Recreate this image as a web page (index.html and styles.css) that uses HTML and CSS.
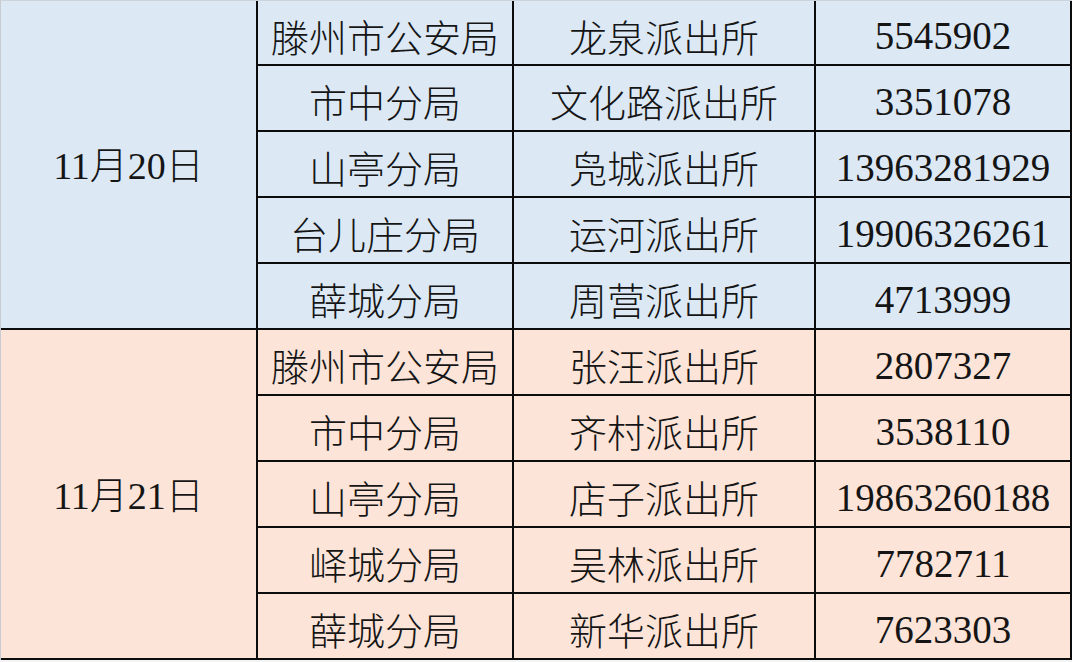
FILE: index.html
```html
<!DOCTYPE html>
<html lang="zh">
<head>
<meta charset="utf-8">
<title>派出所值班表</title>
<link rel="stylesheet" href="styles.css">
</head>
<body>
<table class="duty">
  <colgroup>
    <col class="c-date"><col class="c-bureau"><col class="c-station"><col class="c-phone">
  </colgroup>
  <tbody class="blue">
    <tr><td class="date" rowspan="5">11<span class="cjk">月</span>20<span class="cjk">日</span></td><td class="cjk">滕州市公安局</td><td class="cjk">龙泉派出所</td><td class="phone">5545902</td></tr>
    <tr><td class="cjk">市中分局</td><td class="cjk">文化路派出所</td><td class="phone">3351078</td></tr>
    <tr><td class="cjk">山亭分局</td><td class="cjk">凫城派出所</td><td class="phone">13963281929</td></tr>
    <tr><td class="cjk">台儿庄分局</td><td class="cjk">运河派出所</td><td class="phone">19906326261</td></tr>
    <tr><td class="cjk">薛城分局</td><td class="cjk">周营派出所</td><td class="phone">4713999</td></tr>
  </tbody>
  <tbody class="pink">
    <tr><td class="date" rowspan="5">11<span class="cjk">月</span>21<span class="cjk">日</span></td><td class="cjk">滕州市公安局</td><td class="cjk">张汪派出所</td><td class="phone">2807327</td></tr>
    <tr><td class="cjk">市中分局</td><td class="cjk">齐村派出所</td><td class="phone">3538110</td></tr>
    <tr><td class="cjk">山亭分局</td><td class="cjk">店子派出所</td><td class="phone">19863260188</td></tr>
    <tr><td class="cjk">峄城分局</td><td class="cjk">吴林派出所</td><td class="phone">7782711</td></tr>
    <tr><td class="cjk">薛城分局</td><td class="cjk">新华派出所</td><td class="phone">7623303</td></tr>
  </tbody>
</table>
</body>
</html>
```
FILE: styles.css
```css
html, body {
  margin: 0;
  padding: 0;
  background: #f4f4f4;
  overflow: hidden;
}

.duty {
  border-collapse: separate;
  border-spacing: 0;
  table-layout: fixed;
  width: 1072px;
  border-left: 1px solid #c8ccd0;
  border-top: 1px solid #cdd3da;
  font-family: "Liberation Serif", "Noto Sans CJK SC", serif;
  font-size: 38px;
  font-weight: 400;
  color: #151515;
}

.c-date { width: 257px; }
.c-bureau { width: 256px; }
.c-station { width: 302px; }
.c-phone { width: 256px; }

.duty td {
  box-sizing: border-box;
  height: 66px;
  padding: 6px 0 0 0;
  text-align: center;
  vertical-align: middle;
  white-space: nowrap;
  border-right: 2px solid #0c0c0c;
  border-bottom: 2px solid #0c0c0c;
  line-height: 1;
}

.blue tr:first-child td { height: 65px; }

.cjk {
  font-family: "Noto Sans CJK SC", sans-serif;
  font-weight: 300;
}

.duty td.phone {
  font-size: 39px;
}

.duty td.date {
  padding-top: 0;
  font-size: 38px;
}

.blue td { background: #dce9f5; }
.pink td { background: #fce4d8; }
```
